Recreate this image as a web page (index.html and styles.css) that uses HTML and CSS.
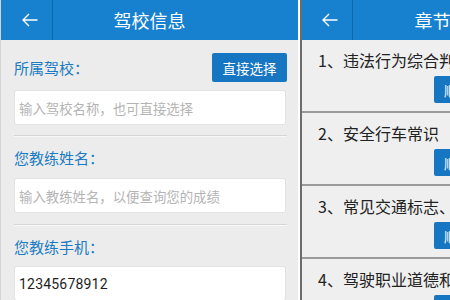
FILE: index.html
```html
<!DOCTYPE html>
<html lang="zh">
<head>
<meta charset="utf-8">
<link rel="stylesheet" href="styles.css">
</head>
<body>
<div class="screens">
  <section class="panel left">
    <header class="bar">
      <div class="back"><svg width="16" height="14" viewBox="0 0 16 14"><path d="M15.5 7H1M7 1L1 7l6 6" fill="none" stroke="#fff" stroke-width="1.4"/></svg></div>
      <h1 class="title">驾校信息</h1>
      <div class="spacer"></div>
    </header>
    <div class="form">
      <div class="row">
        <span class="label">所属驾校：</span>
        <button class="btn">直接选择</button>
      </div>
      <div class="input first"><span class="ph">输入驾校名称，也可直接选择</span></div>
      <div class="divider d1"></div>
      <div class="label l2">您教练姓名：</div>
      <div class="input i2"><span class="ph">输入教练姓名，以便查询您的成绩</span></div>
      <div class="divider d2"></div>
      <div class="label l3">您教练手机：</div>
      <div class="input i3"><span class="val">12345678912</span></div>
    </div>
  </section>
  <section class="panel right">
    <header class="bar">
      <div class="back"><svg width="16" height="14" viewBox="0 0 16 14"><path d="M15.5 7H1M7 1L1 7l6 6" fill="none" stroke="#fff" stroke-width="1.4"/></svg></div>
      <h1 class="title">章节练习</h1>
      <div class="spacer"></div>
    </header>
    <ul class="list">
      <li class="item"><div class="name">1、违法行为综合判断与案例分析</div><div class="acts"><button class="sbtn">顺序练习</button></div></li>
      <li class="item"><div class="name">2、安全行车常识</div><div class="acts"><button class="sbtn">顺序练习</button></div></li>
      <li class="item"><div class="name">3、常见交通标志、标线和交警手势</div><div class="acts"><button class="sbtn">顺序练习</button></div></li>
      <li class="item"><div class="name">4、驾驶职业道德和文明驾驶常识</div><div class="acts"><button class="sbtn">顺序练习</button></div></li>
    </ul>
  </section>
</div>
</body>
</html>
```

FILE: styles.css
```css
* { box-sizing: border-box; margin: 0; padding: 0; }
html, body { width: 450px; height: 300px; overflow: hidden; }
body {
  background: #fff;
  font-family: "Noto Sans CJK SC", "Noto Sans", sans-serif;
}
.screens { display: flex; width: 450px; height: 300px; overflow: hidden; }
.panel { flex: 0 0 298px; width: 298px; height: 300px; display: flex; flex-direction: column; }
.left { background: #ececec; margin-right: 2px; border-left: 1px solid #d4d4d4; }
.right { background: #efefef; border-left: 2px solid #6c6c6c; flex: 0 0 300px; }
.bar {
  height: 40px; flex: 0 0 40px;
  background: #1781cf;
  display: flex; align-items: stretch;
}
.back {
  width: 52px; flex: 0 0 52px;
  border-right: 1px solid #0d69ad;
  display: flex; align-items: center; justify-content: center;
  padding-left: 6px;
}
.right .back { width: 51px; flex-basis: 51px; }
.spacer { width: 52px; flex: 0 0 52px; }
.title {
  flex: 1; text-align: center; color: #fff;
  font-size: 18px; font-weight: normal; line-height: 40px;
}
.form { padding: 0 11px 0 13px; }
.row { margin-top: 13px; height: 29px; display: flex; align-items: center; justify-content: space-between; }
.label { color: #1b7bc3; font-size: 15px; line-height: 20px; }
.btn {
  width: 75px; height: 29px; border: none; border-radius: 2px;
  background: #1776c1; color: #fff;
  font-family: inherit; font-size: 13.5px;
}
.input {
  height: 35px; background: #fff; border: 1px solid #e2e2e2; border-radius: 3px;
  display: flex; align-items: center; padding-left: 4px;
  margin-right: 1px;
}
.first { margin-top: 8px; }
.ph { color: #b4b4b4; font-size: 13.4px; }
.val { color: #1e1e1e; font-size: 14px; font-family: Roboto, "Noto Sans", sans-serif; letter-spacing: 0.2px; }
.divider { height: 2px; border-top: 1px solid #d6d6d6; border-bottom: 1px solid #f8f8f8; }
.d1 { margin-top: 10px; }
.l2 { margin-top: 11px; }
.i2 { margin-top: 10px; }
.d2 { margin-top: 11px; }
.l3 { margin-top: 11px; }
.i3 { margin-top: 9px; }
.list { list-style: none; }
.item {
  height: 73px; padding: 10px 0 0 16px;
  border-bottom: 2px solid #9a9a9a;
}
.name { font-size: 16px; line-height: 20px; color: #222; white-space: nowrap; }
.acts { margin-top: 6px; padding-left: 116px; display: flex; }
.sbtn {
  width: 75px; height: 27px; border: none; border-radius: 2px;
  background: #1776c1; color: #fff;
  font-family: inherit; font-size: 13.5px; text-align: left; padding-left: 10px;
}
```
